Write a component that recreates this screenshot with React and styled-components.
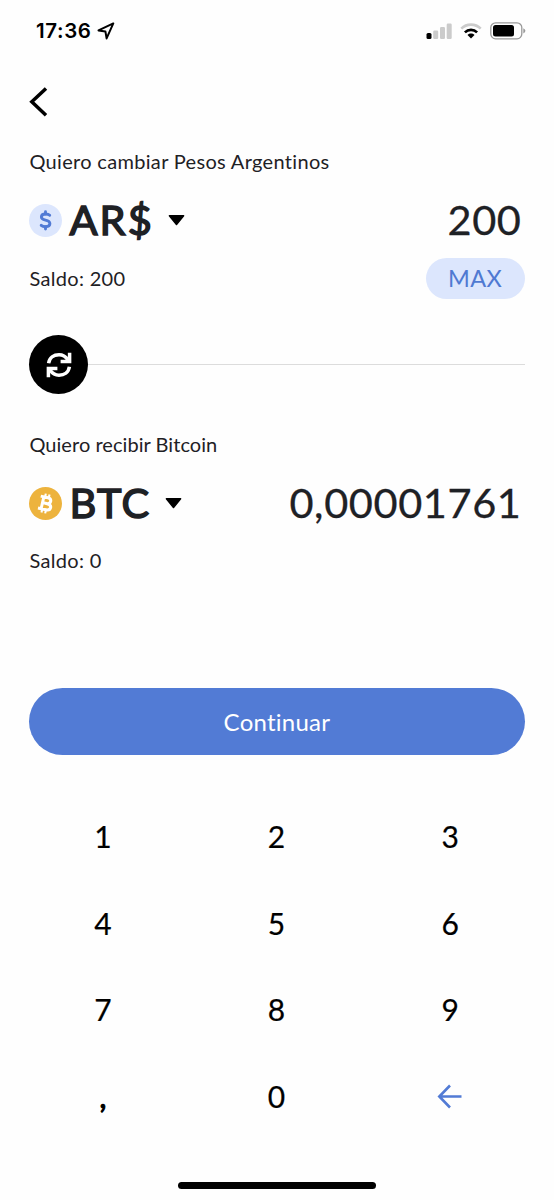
import { useState } from 'react';
import styled, { createGlobalStyle } from 'styled-components';

const GlobalStyle = createGlobalStyle`
  * {
    box-sizing: border-box;
  }

  body {
    margin: 0;
    background-color: #fefefe;
  }

  button {
    margin: 0;
    padding: 0;
    border: none;
    background: none;
    font-family: inherit;
    cursor: pointer;
  }

  svg {
    display: block;
    flex: none;
  }
`;

export const Screen = styled.main`
  width: 554px;
  height: 1200px;
  overflow: hidden;
  display: flex;
  flex-direction: column;
  background-color: #fefefe;
  color: #1e2125;
  font-family: Lato, 'Open Sans', sans-serif;
`;

export const StatusBar = styled.div`
  height: 61px;
  padding: 0 28px 0 36px;
  display: flex;
  align-items: center;
  justify-content: space-between;
  color: #000;
`;

export const Clock = styled.div`
  display: flex;
  align-items: center;
  gap: 6px;
  font-family: Inter, 'Liberation Sans', sans-serif;
  font-size: 20.5px;
  font-weight: 600;
  letter-spacing: 0.6px;
`;

export const StatusIcons = styled.div`
  display: flex;
  align-items: center;
  gap: 8px;
`;

export const Header = styled.header`
  height: 81px;
  padding-left: 29px;
  display: flex;
  align-items: center;
`;

export const Section = styled.section`
  padding: 0 29.5px 0 29.4px;
`;

export const Label = styled.div`
  height: 40px;
  padding-bottom: 2px;
  line-height: 38px;
  font-size: 20px;
  letter-spacing: ${props => props.$spacing || '0.32px'};
  white-space: nowrap;
`;

export const AmountRow = styled.div`
  height: 76px;
  padding-right: 3px;
  display: flex;
  align-items: center;
  justify-content: space-between;
`;

export const CurrencyBtn = styled.button`
  display: flex;
  align-items: center;
  color: #1e2125;
`;

export const Code = styled.span`
  margin: 0 14.5px 0 7px;
  padding-bottom: 2px;
  font-size: 41.5px;
  line-height: 50px;
  letter-spacing: ${props => props.$spacing};
  -webkit-text-stroke: 1.5px #1e2125;
`;

export const Amount = styled.div`
  padding-bottom: 3px;
  font-size: 41.5px;
  line-height: 50px;
  letter-spacing: 0.6px;
  -webkit-text-stroke: 0.3px #1e2125;
`;

export const BalanceRow = styled.div`
  height: 41px;
  padding-bottom: ${props => (props.$raised ? '2px' : '0')};
  display: flex;
  align-items: center;
  justify-content: space-between;
`;

export const MaxBtn = styled.button`
  width: 99px;
  height: 41px;
  padding-bottom: 2px;
  border-radius: 21px;
  background-color: #dce6fd;
  color: #4f79d2;
  font-size: 23.5px;
  letter-spacing: 0.3px;
`;

export const Divider = styled.div`
  padding: 36px 29.5px 31px 29.4px;
  display: flex;
  align-items: center;

  &::after {
    content: '';
    flex: 1;
    height: 1px;
    background-color: #dcdcdc;
  }
`;

export const SwapBtn = styled.button`
  width: 59px;
  height: 59px;
  border-radius: 50%;
  background-color: #000;
  display: grid;
  place-items: center;
`;

export const ContinueBtn = styled.button`
  height: 67px;
  margin: 106px 29.5px 0 29.4px;
  padding-bottom: 1px;
  border-radius: 34px;
  background-color: #527bd5;
  color: #fff;
  font-size: 24px;
  letter-spacing: 0.25px;
`;

export const Keypad = styled.div`
  margin: 38.5px 17px 0 16px;
  display: grid;
  grid-template-columns: repeat(3, 1fr);
  grid-auto-rows: 86.5px;
`;

export const Key = styled.button`
  padding-bottom: 1px;
  display: grid;
  place-items: center;
  color: #000;
  font-size: 30px;
  -webkit-text-stroke: ${props => (props.$heavy ? '1.2px' : '0.2px')} #000;
`;

export const HomeBar = styled.div`
  width: 198px;
  height: 7px;
  margin: 42.5px auto 0;
  border-radius: 4px;
  background-color: #000;
`;

const LocationIcon = () => (
  <svg width="18" height="18" viewBox="0 0 18 18" fill="none" stroke="#000" strokeWidth="2" strokeLinejoin="round">
    <path d="M16.3 1.4 L1.5 8.4 L8.4 9.4 L9.6 16.4 Z" />
  </svg>
);

const SignalIcon = () => (
  <svg width="26" height="16" viewBox="0 0 26 16" fill="#cbcbcb">
    <rect x="0.5" y="10" width="5" height="6" rx="1.5" fill="#000" />
    <rect x="7.2" y="7.5" width="5" height="8.5" rx="1.2" />
    <rect x="14" y="4" width="5" height="12" rx="1.2" />
    <rect x="20.7" y="0.5" width="5" height="15.5" rx="1.2" />
  </svg>
);

const WifiIcon = () => (
  <svg width="22" height="16" viewBox="0 0 22 16" fill="none" strokeWidth="2.6">
    <path d="M1.3 5.7 C6.7 0.3 15.3 0.3 20.7 5.7" stroke="#cbcbcb" />
    <path d="M4.9 9.4 C8.3 6 13.7 6 17.1 9.4" stroke="#000" />
    <path d="M7.5 12 C9.5 10.1 12.5 10.1 14.5 12 L11 15.6 Z" fill="#000" />
  </svg>
);

const BatteryIcon = () => (
  <svg width="36" height="18" viewBox="0 0 36 18">
    <rect x="0.8" y="0.8" width="31" height="16" rx="4.8" fill="none" stroke="#999" strokeWidth="1.3" />
    <rect x="3" y="3" width="21" height="11.6" rx="2.5" fill="#000" />
    <path d="M33.3 6.2 Q35.4 7.2 35.4 8.8 Q35.4 10.4 33.3 11.4 Z" fill="#999" />
  </svg>
);

const BackIcon = () => (
  <svg width="20" height="32" viewBox="0 0 20 32" fill="none" stroke="#000" strokeWidth="3.5">
    <path d="M17 2.4 L2.8 15.8 L17 29.2" />
  </svg>
);

const PesoIcon = () => (
  <svg width="33" height="33" viewBox="0 0 33 33">
    <circle cx="16.5" cy="16.5" r="16.5" fill="#dce6fd" />
    <g fill="none" stroke="#527bd5" strokeWidth="2.9" strokeLinecap="round" strokeLinejoin="round">
      <path d="M20.7 11.2 C19.8 10.3 18.3 10 16.5 10 C14 10 12.4 11.2 12.4 13 C12.4 15.1 14.5 15.7 16.5 16.2 C18.7 16.7 20.9 17.3 20.9 19.6 C20.9 21.7 19.1 22.7 16.6 22.7 C14.7 22.7 13.2 22.2 12.2 21.3" />
      <path d="M16.5 7.8 V10 M16.5 22.7 V25" />
    </g>
  </svg>
);

const BitcoinIcon = () => (
  <svg width="33" height="33" viewBox="0 0 33 33">
    <circle cx="16.5" cy="16.5" r="16.5" fill="#edb33d" />
    <g transform="rotate(13 16.5 16.5)" fill="none" stroke="#fff" strokeWidth="3">
      <path d="M10.2 10.4 H17.6 C22.2 10.4 22.2 16.3 17.6 16.3 H13.6 H18.2 C23.8 16.3 23.8 22.6 18.2 22.6 H10.2 M13.4 10.4 V22.6" />
      <path d="M14.6 6.8 V10.5 M18.4 6.8 V10.5 M14.6 22.6 V26.2 M18.4 22.6 V26.2" strokeWidth="2.1" />
    </g>
  </svg>
);

const Caret = () => (
  <svg width="17" height="11" viewBox="0 0 17 11">
    <path d="M1.4 0.8 H15.6 L8.5 9.4 Z" fill="#000" stroke="#000" strokeWidth="1.5" strokeLinejoin="round" />
  </svg>
);

const SwapIcon = () => (
  <svg width="26" height="26" viewBox="0 0 26 26" fill="none" stroke="#fff" strokeWidth="3.5">
    <path d="M2.6 11.2 C3.4 5.7 7.8 2.8 13 2.8 C17.2 2.8 19.8 4.8 22 8" />
    <path d="M23.6 0.8 V9.4 H14.6" />
    <path d="M23.4 14.8 C22.6 20.3 18.2 23.2 13 23.2 C8.8 23.2 6.2 21.2 4 18" />
    <path d="M2.4 25.2 V16.6 H11.4" />
  </svg>
);

const DeleteIcon = () => (
  <svg width="26" height="26" viewBox="0 0 26 26" fill="none" stroke="#527bd5" strokeWidth="2.6">
    <path d="M24.5 13.5 H2.3 M13 2.5 L2.3 13.5 L13 24.5" />
  </svg>
);

const keys = ['1', '2', '3', '4', '5', '6', '7', '8', '9', ',', '0'];

const App = () => {
  const [amount, setAmount] = useState('200');

  const pressKey = (key) => setAmount(amount + key);

  return (
    <>
      <GlobalStyle />
      <Screen>
        <StatusBar>
          <Clock>
            17:36
            <LocationIcon />
          </Clock>
          <StatusIcons>
            <SignalIcon />
            <WifiIcon />
            <BatteryIcon />
          </StatusIcons>
        </StatusBar>

        <Header>
          <button aria-label="Volver"><BackIcon /></button>
        </Header>

        <Section>
          <Label>Quiero cambiar Pesos Argentinos</Label>
          <AmountRow>
            <CurrencyBtn>
              <PesoIcon />
              <Code $spacing="2.1px">AR$</Code>
              <Caret />
            </CurrencyBtn>
            <Amount>{amount}</Amount>
          </AmountRow>
          <BalanceRow>
            <Label>Saldo: 200</Label>
            <MaxBtn onClick={() => setAmount('200')}>MAX</MaxBtn>
          </BalanceRow>
        </Section>

        <Divider>
          <SwapBtn aria-label="Invertir"><SwapIcon /></SwapBtn>
        </Divider>

        <Section>
          <Label $spacing="0.05px">Quiero recibir Bitcoin</Label>
          <AmountRow>
            <CurrencyBtn>
              <BitcoinIcon />
              <Code $spacing="1.4px">BTC</Code>
              <Caret />
            </CurrencyBtn>
            <Amount>0,00001761</Amount>
          </AmountRow>
          <BalanceRow $raised>
            <Label>Saldo: 0</Label>
          </BalanceRow>
        </Section>

        <ContinueBtn>Continuar</ContinueBtn>

        <Keypad>
          {keys.map((key) => (
            <Key key={key} $heavy={key === ','} onClick={() => pressKey(key)}>{key}</Key>
          ))}
          <Key aria-label="Borrar" onClick={() => setAmount(amount.slice(0, -1))}>
            <DeleteIcon />
          </Key>
        </Keypad>

        <HomeBar />
      </Screen>
    </>
  );
};

export default App;
